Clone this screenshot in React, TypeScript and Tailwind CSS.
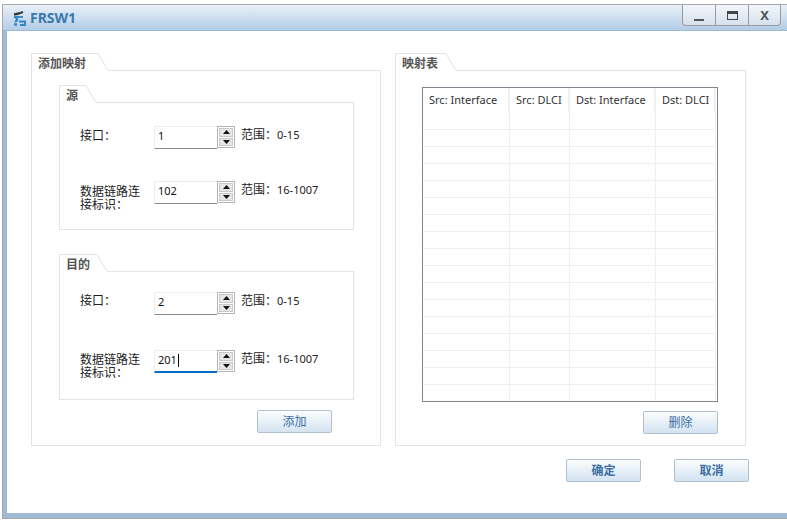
const uiFont = "font-['Tahoma','Noto_Sans','Noto_Sans_CJK_SC',sans-serif]";

const rowLines = Array.from({ length: 17 });

function GroupBox({ title, tabWidth, children, className }: { title: string; tabWidth: string; children: React.ReactNode; className: string }) {
  return (
    <div className={`flex flex-col ${className}`}>
      {/* tab header with the slanted corner */}
      <div className="flex h-[18px]">
        <div className={`${tabWidth} h-full border-l border-t border-[#e3e3e3] pl-[6px] text-[12px] leading-[19px] font-bold text-[#555555]`}>
          {title}
        </div>
        <svg width="12" height="18" viewBox="0 0 12 18" className="shrink-0">
          <path d="M0 .5 H1 L11 17.5 H12" fill="none" stroke="#e3e3e3" />
        </svg>
        <div className="flex-1 border-b border-[#e3e3e3]" />
      </div>
      <div className="flex-1 border-l border-r border-b border-[#e3e3e3]">{children}</div>
    </div>
  );
}

function Arrow({ up }: { up?: boolean }) {
  return (
    <svg width="7" height="4" viewBox="0 0 7 4">
      <path d={up ? "M3.5 0 L7 4 H0 Z" : "M0 0 H7 L3.5 4 Z"} fill="#111111" />
    </svg>
  );
}

function SpinBox({ value, active }: { value: string; active?: boolean }) {
  return (
    <div className="flex h-[23px] w-[81px] shrink-0">
      <div
        className={`flex h-full w-[63px] items-center pb-[2px] pl-[3px] text-[11px] text-[#111111] border-t border-l border-[#ececec] ${
          active ? "border-b-2 border-b-[#0a6abf]" : "border-b border-b-[#8c8c8c]"
        }`}
      >
        {value}
        {active && <span className="ml-px h-[13px] w-px bg-black" />}
      </div>
      <div className="flex h-[22px] w-[18px] flex-col gap-px border border-[#b4b4b4] p-px">
        <div className="flex flex-1 items-center justify-center bg-[#e6e6e6] border border-[#c8c8c8]">
          <Arrow up />
        </div>
        <div className="flex flex-1 items-center justify-center bg-[#e6e6e6] border border-[#c8c8c8]">
          <Arrow />
        </div>
      </div>
    </div>
  );
}

function FieldRow({ label, value, range, active, className, labelTop }: { label: string; value: string; range: string; active?: boolean; className: string; labelTop: string }) {
  return (
    <div className={`flex pl-[20px] ${className}`}>
      <div className={`w-[74px] shrink-0 pr-[11px] text-[12px] leading-[13px] text-[#222222] ${labelTop}`}>{label}</div>
      <SpinBox value={value} active={active} />
      <div className="ml-[6px] pt-[1px] text-[12px] leading-[16px] text-[#222222]">
        范围：<span className="text-[11px]">{range}</span>
      </div>
    </div>
  );
}

function ActionButton({ label, bold }: { label: string; bold?: boolean }) {
  return (
    <button
      type="button"
      className={`h-[23px] w-[75px] rounded-[2px] border border-[#b4bfcd] bg-gradient-to-b from-[#fbfdfe] to-[#d3e3f1] text-[12px] text-[#3a6ea5] ${bold ? "font-bold" : ""}`}
    >
      {label}
    </button>
  );
}

function AppIcon() {
  return (
    <svg width="17" height="18" viewBox="0 0 17 18" className="shrink-0">
      <path d="M4 5.5 L9 4.5 M9 4.5 L13 3" stroke="#3a3a3a" strokeWidth="2.4" />
      <path d="M4 8 H13" stroke="#2f86c8" strokeWidth="1.8" />
      <path d="M5 8 C8 10 8 11 5 13" fill="none" stroke="#2f86c8" strokeWidth="2.2" />
      <path d="M9 12.5 H15 V16 H10" fill="none" stroke="#2f86c8" strokeWidth="2" />
      <path d="M4 15.5 H7" stroke="#2f86c8" strokeWidth="2.4" />
    </svg>
  );
}

export default function App() {
  const headers = ["Src: Interface", "Src: DLCI", "Dst: Interface", "Dst: DLCI"];
  const colWidths = ["w-[87px]", "w-[60px]", "w-[86px]", "w-[60px]"];
  return (
    <div className={`h-[520px] w-[787px] overflow-hidden bg-white pl-[2px] pt-[4px] pb-[1px] ${uiFont}`}>
      <div className="flex h-[515px] flex-col border-l border-t border-b border-[#a8a8a8]">
        {/* === Title bar === */}
        <div className="flex h-[25px] shrink-0 items-start bg-gradient-to-b from-[#e9f0f8] to-[#b2cde6] pl-[7px]">
          <div className="flex h-full items-center gap-[3px]">
            <AppIcon />
            <span className="text-[14px] font-bold text-[#3a78ae]">FRSW1</span>
          </div>
          <div className="ml-auto mr-[6px] flex h-[21px] w-[99px] rounded-b-[4px] border-b border-l border-r border-[#9a9a9a] bg-gradient-to-b from-[#f3f6fa] to-[#d5e1ee]">
            <div className="flex w-[33px] items-end justify-center pb-[4px] border-r border-[#9a9a9a]">
              <div className="h-[2px] w-[10px] bg-[#555555]" />
            </div>
            <div className="flex w-[33px] items-center justify-center border-r border-[#9a9a9a]">
              <div className="h-[9px] w-[11px] border border-t-[3px] border-[#444444]" />
            </div>
            <div className="flex flex-1 items-center justify-center text-[13px] font-bold leading-none text-[#555555]">X</div>
          </div>
        </div>

        {/* === Body === */}
        <div className="flex-1 border-l-[4px] border-b-[5px] border-t border-[#9fbbd4] bg-white pl-[24px] pt-[22px]">
          <div className="flex gap-[14px]">
            {/* Add mapping */}
            <GroupBox title="添加映射" tabWidth="w-[66px]" className="h-[393px] w-[350px]">
              <div className="flex flex-col pl-[27px] pt-[14px]">
                <GroupBox title="源" tabWidth="w-[26px]" className="h-[145px] w-[295px]">
                  <FieldRow label="接口：" value="1" range="0-15" labelTop="pt-[3px]" className="pt-[23px]" />
                  <FieldRow label="数据链路连接标识：" value="102" range="16-1007" labelTop="pt-[4px]" className="pt-[32px]" />
                </GroupBox>
                <GroupBox title="目的" tabWidth="w-[37px]" className="mt-[24px] h-[146px] w-[295px]">
                  <FieldRow label="接口：" value="2" range="0-15" labelTop="pt-[2px]" className="pt-[20px]" />
                  <FieldRow label="数据链路连接标识：" value="201" range="16-1007" labelTop="pt-[3px]" active className="pt-[35px]" />
                </GroupBox>
                <div className="mt-[10px] flex w-[273px] justify-end">
                  <ActionButton label="添加" />
                </div>
              </div>
            </GroupBox>

            {/* Mapping table */}
            <GroupBox title="映射表" tabWidth="w-[50px]" className="h-[393px] w-[351px]">
              <div className="pl-[26px] pt-[16px]">
                <div className="h-[315px] w-[296px] overflow-hidden border border-[#80868e]">
                  <div className="flex h-[25px] w-[293px] text-[11px] text-[#333333]">
                    {headers.map((h, i) => (
                      <div key={h} className={`flex items-center border-r-2 border-[#f0f0f0] pl-[6px] ${colWidths[i]}`}>
                        {h}
                      </div>
                    ))}
                  </div>
                  <div className="w-[293px]">
                    {rowLines.map((_, r) => (
                      <div key={r} className="flex h-[17px]">
                        {colWidths.map((w, c) => (
                          <div key={c} className={`${w} border-r border-b border-[#efefef]`} />
                        ))}
                      </div>
                    ))}
                  </div>
                </div>
                <div className="mt-[9px] flex w-[296px] justify-end">
                  <ActionButton label="删除" />
                </div>
              </div>
            </GroupBox>
          </div>

          {/* === Dialog buttons === */}
          <div className="mt-[13px] flex w-[718px] justify-end gap-[33px]">
            <ActionButton label="确定" bold />
            <ActionButton label="取消" bold />
          </div>
        </div>
      </div>
    </div>
  );
}
